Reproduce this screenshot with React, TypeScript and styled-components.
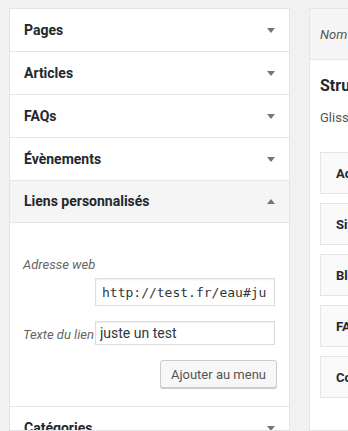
import styled, { createGlobalStyle } from 'styled-components';

const Global = createGlobalStyle`
  html, body {
    margin: 0;
    padding: 0;
    background: #f1f1f1;
    overflow: hidden;
  }
  body {
    font-family: Roboto, "Liberation Sans", sans-serif;
    color: #23282d;
  }
`;

const Page = styled.div`
  display: flex;
  align-items: flex-start;
  gap: 19px;
  padding: 8px 0 0 9px;
  height: 431px;
  box-sizing: border-box;
`;

const Sidebar = styled.div`
  width: 281px;
  flex: none;
  background: #fff;
  border: 1px solid #e5e5e5;
  box-sizing: border-box;
  height: 423px;
  overflow: hidden;
`;

const Section = styled.div`
  border-bottom: 1px solid #e5e5e5;
`;

const Header = styled.div<{ $open?: boolean }>`
  display: flex;
  align-items: center;
  justify-content: space-between;
  height: 42px;
  padding: 0 14px 1px 14px;
  box-sizing: border-box;
  background: ${p => (p.$open ? '#f5f5f5' : '#fff')};
  border-bottom: ${p => (p.$open ? '1px solid #e5e5e5' : 'none')};
  font-size: 14px;
  font-weight: 700;
  color: #23282d;
`;

const Arrow = styled.span<{ $up?: boolean }>`
  width: 0;
  height: 0;
  border-left: 4px solid transparent;
  border-right: 4px solid transparent;
  ${p => (p.$up ? 'border-bottom: 5px solid #72777c;' : 'border-top: 5px solid #72777c;')}
  margin-top: ${p => (p.$up ? '0' : '2px')};
`;

const Content = styled.div`
  display: flex;
  flex-direction: column;
  padding: 32px 14px 18px 13px;
`;

const Label = styled.label`
  font-size: 13px;
  font-style: italic;
  color: #666;
  line-height: 20px;
  white-space: nowrap;
`;

const FieldRow = styled.div<{ $inline?: boolean }>`
  display: flex;
  align-items: center;
  justify-content: ${p => (p.$inline ? 'space-between' : 'flex-end')};
  margin-top: ${p => (p.$inline ? '15px' : '3px')};
  ${Label} {
    padding-top: 4px;
  }
`;

const Input = styled.input<{ $mono?: boolean }>`
  width: 180px;
  height: ${p => (p.$mono ? '28px' : '24px')};
  box-sizing: border-box;
  border: 1px solid #ddd;
  box-shadow: inset 0 1px 2px rgba(0, 0, 0, 0.07);
  background: #fff;
  color: #32373c;
  padding: ${p => (p.$mono ? '0 6px' : '0 4px')};
  font-family: ${p => (p.$mono ? '"DejaVu Sans Mono", "Liberation Mono", monospace' : 'Roboto, "Liberation Sans", sans-serif')};
  font-size: ${p => (p.$mono ? '13px' : '14px')};
  outline: none;
  margin: 0;
`;

const Actions = styled.div`
  display: flex;
  justify-content: flex-end;
  margin-top: 15px;
  margin-right: -2px;
`;

const Button = styled.button`
  height: 28px;
  padding: 0 10px;
  border: 1px solid #ccc;
  border-radius: 3px;
  background: #f7f7f7;
  box-shadow: 0 1px 0 #ccc;
  color: #555;
  font-family: Roboto, "Liberation Sans", sans-serif;
  font-size: 13px;
`;

const Panel = styled.div`
  flex: none;
  width: 300px;
  height: 423px;
  background: #fff;
  border: 1px solid #e5e5e5;
  box-sizing: border-box;
`;

const PanelHead = styled.div`
  height: 50px;
  display: flex;
  align-items: center;
  padding: 0 10px;
  background: #f5f5f5;
  border-bottom: 1px solid #e5e5e5;
  font-size: 13px;
  font-style: italic;
  color: #555;
  white-space: nowrap;
`;

const PanelBody = styled.div`
  padding: 14px 10px;
`;

const Title = styled.h3`
  margin: 0;
  font-size: 16px;
  font-weight: 700;
  line-height: 24px;
  color: #23282d;
  white-space: nowrap;
`;

const Hint = styled.p`
  margin: 11px 0 0;
  font-size: 13px;
  line-height: 18px;
  color: #555;
  white-space: nowrap;
`;

const Items = styled.div`
  display: flex;
  flex-direction: column;
  gap: 9px;
  margin-top: 25px;
`;

const Item = styled.div`
  height: 42px;
  box-sizing: border-box;
  border: 1px solid #e5e5e5;
  background: #fafafa;
  display: flex;
  align-items: center;
  padding: 0 15px;
  font-size: 13px;
  font-weight: 700;
  color: #23282d;
  white-space: nowrap;
`;

const closed = ['Pages', 'Articles', 'FAQs', 'Évènements'];
const items = ['Accueil', 'Site', 'Blog', 'FAQs', 'Contact'];

const App = () => (
  <>
    <Global />
    <Page>
      <Sidebar>
        {closed.map(t => (
          <Section key={t}>
            <Header>
              {t}
              <Arrow />
            </Header>
          </Section>
        ))}
        <Section>
          <Header $open>
            Liens personnalisés
            <Arrow $up />
          </Header>
          <Content>
            <Label>Adresse web</Label>
            <FieldRow>
              <Input $mono defaultValue="http://test.fr/eau#ju" />
            </FieldRow>
            <FieldRow $inline>
              <Label>Texte du lien</Label>
              <Input defaultValue="juste un test" />
            </FieldRow>
            <Actions>
              <Button>Ajouter au menu</Button>
            </Actions>
          </Content>
        </Section>
        <Section>
          <Header>
            Catégories
            <Arrow />
          </Header>
        </Section>
      </Sidebar>
      <Panel>
        <PanelHead>Nom du menu</PanelHead>
        <PanelBody>
          <Title>Structure du menu</Title>
          <Hint>Glissez chaque élément pour les placer dans l’ordre que vous préférez.</Hint>
          <Items>
            {items.map(t => (
              <Item key={t}>{t}</Item>
            ))}
          </Items>
        </PanelBody>
      </Panel>
    </Page>
  </>
);

export default App;
